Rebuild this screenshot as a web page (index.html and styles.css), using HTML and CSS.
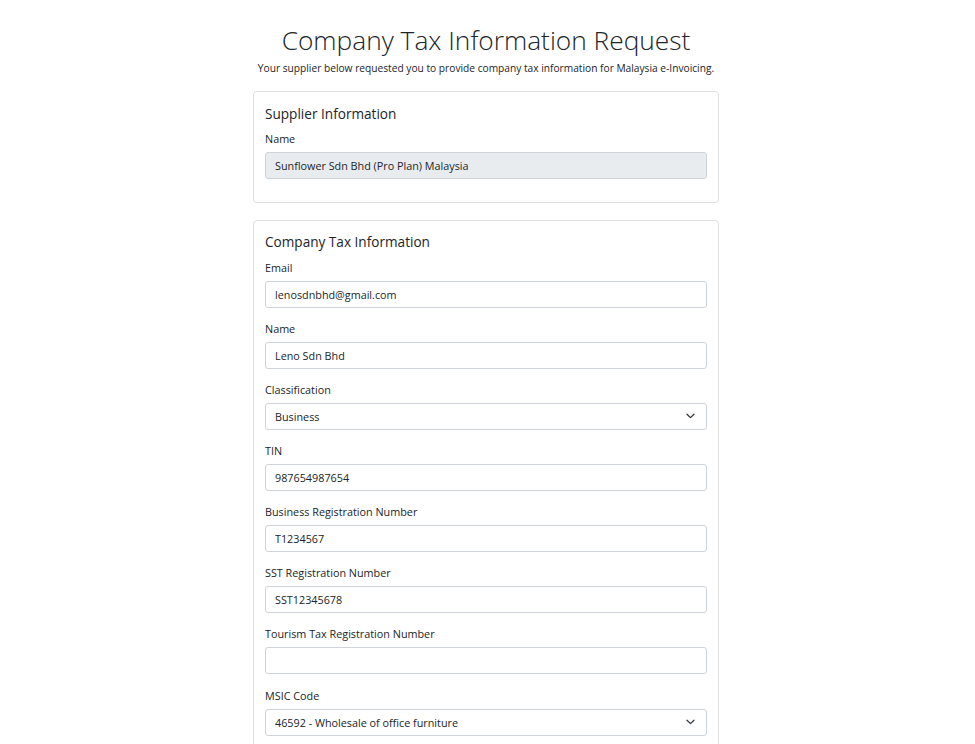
FILE: index.html
```html
<!DOCTYPE html>
<html lang="en">
<head>
<meta charset="utf-8">
<title>Company Tax Information Request</title>
<link rel="stylesheet" href="styles.css">
</head>
<body>
<main class="page">
  <header class="intro">
    <h1 class="title">Company Tax Information Request</h1>
    <p class="subtitle">Your supplier below requested you to provide company tax information for Malaysia e-Invoicing.</p>
  </header>

  <section class="card">
    <h5 class="card-title">Supplier Information</h5>
    <div class="field">
      <label class="label">Name</label>
      <input class="input" type="text" value="Sunflower Sdn Bhd (Pro Plan) Malaysia" disabled>
    </div>
  </section>

  <section class="card">
    <h5 class="card-title">Company Tax Information</h5>
    <div class="field">
      <label class="label">Email</label>
      <input class="input" type="text" value="lenosdnbhd@gmail.com">
    </div>
    <div class="field">
      <label class="label">Name</label>
      <input class="input" type="text" value="Leno Sdn Bhd">
    </div>
    <div class="field">
      <label class="label">Classification</label>
      <div class="select-wrap">
        <select class="input select"><option>Business</option></select>
        <svg class="chev" width="9" height="6" viewBox="0 0 9 6"><path d="M1 1.2 4.5 4.6 8 1.2" fill="none" stroke="#343a40" stroke-width="1.3" stroke-linecap="round" stroke-linejoin="round"/></svg>
      </div>
    </div>
    <div class="field">
      <label class="label">TIN</label>
      <input class="input" type="text" value="987654987654">
    </div>
    <div class="field">
      <label class="label">Business Registration Number</label>
      <input class="input" type="text" value="T1234567">
    </div>
    <div class="field">
      <label class="label">SST Registration Number</label>
      <input class="input" type="text" value="SST12345678">
    </div>
    <div class="field">
      <label class="label">Tourism Tax Registration Number</label>
      <input class="input" type="text" value="">
    </div>
    <div class="field">
      <label class="label">MSIC Code</label>
      <div class="select-wrap">
        <select class="input select"><option>46592 - Wholesale of office furniture</option></select>
        <svg class="chev" width="9" height="6" viewBox="0 0 9 6"><path d="M1 1.2 4.5 4.6 8 1.2" fill="none" stroke="#343a40" stroke-width="1.3" stroke-linecap="round" stroke-linejoin="round"/></svg>
      </div>
    </div>
  </section>
</main>
</body>
</html>
```

FILE: styles.css
```css
* { box-sizing: border-box; }
html, body { margin: 0; padding: 0; background: #fff; }
body {
  font-family: "Open Sans", "Noto Sans", sans-serif;
  color: #212529;
  font-size: 11px;
}
.page {
  width: 466px;
  margin: 0 0 0 calc(50% - 234.5px);
  padding-top: 20px;
  display: flex;
  flex-direction: column;
  gap: 17px;
}
.intro { text-align: center; margin-bottom: -1px; }
.title {
  margin: 0 -40px;
  font-size: 26.3px;
  font-weight: 300;
  line-height: 40px;
  color: #212529;
  white-space: nowrap;
}
.subtitle {
  margin: 1px -40px 0;
  font-size: 10.2px;
  line-height: 14px;
  white-space: nowrap;
}
.card {
  border: 1px solid #dfdfdf;
  border-radius: 4px;
  padding: 11.5px 11px 10.5px;
}
.card-title {
  margin: 0 0 7.5px;
  font-size: 13.6px;
  font-weight: 400;
  line-height: 19px;
}
.field { margin-bottom: 12.14px; display: flex; flex-direction: column; }
.label {
  font-size: 10.8px;
  line-height: 17px;
  margin-bottom: 5px;
}
.input {
  width: 100%;
  height: 27px;
  border: 1px solid #ced4da;
  border-radius: 3px;
  padding: 0 9px;
  font-family: inherit;
  font-size: 10.8px;
  color: #212529;
  background: #fff;
  outline: none;
}
.input:disabled { background: #e9ecef; color: #212529; opacity: 1; }
.select-wrap { position: relative; }
.select { appearance: none; -webkit-appearance: none; }
.chev { position: absolute; right: 12px; top: 10px; pointer-events: none; }
```
